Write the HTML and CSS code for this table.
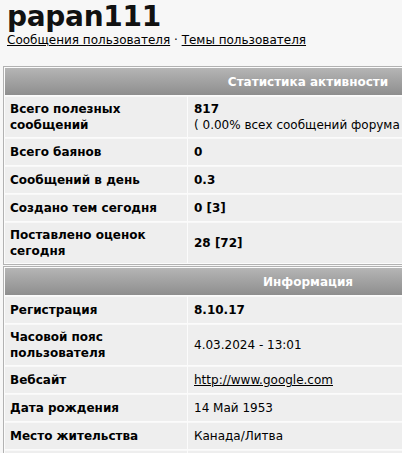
FILE: index.html
```html
<!DOCTYPE html>
<html>
<head>
<meta charset="utf-8">
<link rel="stylesheet" href="styles.css">
</head>
<body>
<div class="page">
  <h1 class="user">papan111</h1>
  <div class="links"><a href="#">Сообщения пользователя</a> · <a href="#">Темы пользователя</a></div>

  <table class="tbl">
    <tr><th colspan="2">Статистика активности</th></tr>
    <tr><td class="k">Всего полезных сообщений</td><td class="v"><b>817</b><br>( 0.00% всех сообщений форума )</td></tr>
    <tr><td class="k">Всего баянов</td><td class="v"><b>0</b></td></tr>
    <tr><td class="k">Сообщений в день</td><td class="v"><b>0.3</b></td></tr>
    <tr><td class="k">Создано тем сегодня</td><td class="v"><b>0 [3]</b></td></tr>
    <tr><td class="k">Поставлено оценок сегодня</td><td class="v"><b>28 [72]</b></td></tr>
  </table>

  <table class="tbl">
    <tr><th colspan="2">Информация</th></tr>
    <tr><td class="k">Регистрация</td><td class="v"><b>8.10.17</b></td></tr>
    <tr><td class="k">Часовой пояс пользователя</td><td class="v">4.03.2024 - 13:01</td></tr>
    <tr><td class="k">Вебсайт</td><td class="v"><a href="#">http://www.google.com</a></td></tr>
    <tr><td class="k">Дата рождения</td><td class="v">14 Май 1953</td></tr>
    <tr><td class="k">Место жительства</td><td class="v">Канада/Литва</td></tr>
    <tr><td class="k">&nbsp;</td><td class="v">&nbsp;</td></tr>
  </table>
</div>
</body>
</html>
```
FILE: styles.css
```css
html, body {
  margin: 0;
  padding: 0;
  overflow: hidden;
  background: #f7f7f7;
}
.page {
  width: 620px;
  padding: 0 0 0 3px;
  font-family: "DejaVu Sans", Verdana, sans-serif;
  font-size: 12px;
  color: #000;
}
.user {
  margin: 0;
  padding: 3px 0 0 4px;
  font-size: 28px;
  line-height: 28px;
  font-weight: bold;
  letter-spacing: -0.3px;
  color: #111;
}
.links {
  padding: 1px 0 0 4px;
  font-size: 12px;
  line-height: 16px;
  height: 34px;
}
.links a, .v a {
  color: #000;
  text-decoration: underline;
}
.tbl {
  width: 610px;
  border: 1px solid #b2b2b2;
  border-collapse: separate;
  border-spacing: 1px;
  background: #fbfbfb;
  margin-bottom: 1px;
}
.tbl th {
  height: 27px;
  padding: 0;
  color: #fff;
  font-weight: bold;
  text-align: center;
  background: linear-gradient(#b5b5b5, #8e8e8e);
}
.tbl td {
  background: #eeeeee;
  border-top: 1px solid #f8f8f8;
  padding: 4px 5px;
  line-height: 16px;
  height: 18px;
  vertical-align: middle;
}
.tbl td.k {
  width: 172px;
  font-weight: bold;
}
.tbl td.v {
  padding-left: 6px;
}
```
